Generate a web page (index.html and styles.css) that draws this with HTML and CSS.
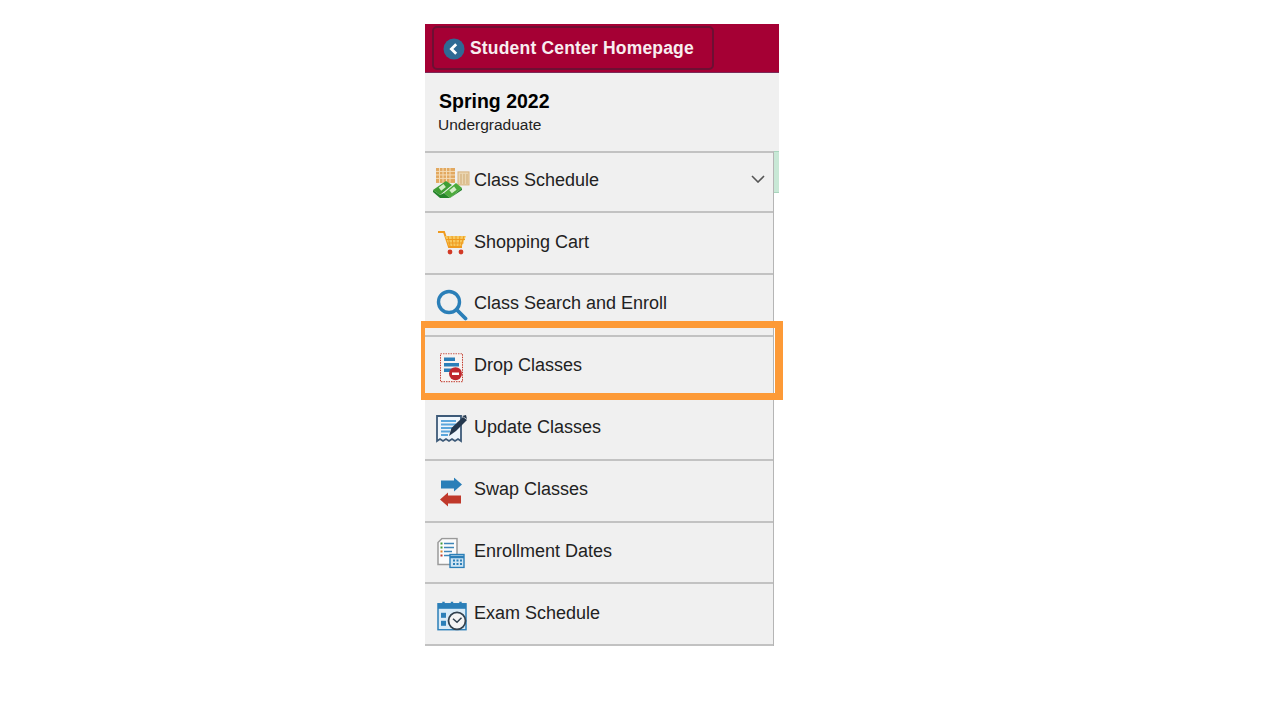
FILE: index.html
```html
<!DOCTYPE html>
<html>
<head>
	<meta charset="utf-8">
	<title>Student Center Homepage</title>
	<link rel="stylesheet" href="styles.css">
</head>
<body>

<div class='panel'>
	<header class='topbar'>
		<a class='back' href='#'>
			<svg class='back-icon' width='22' height='22' viewBox='0 0 22 22'>
				<circle cx='11' cy='11' r='10.5' fill='#2f6a94'/>
				<path d='M13.2 6.2 8.4 11l4.8 4.8' fill='none' stroke='#fff' stroke-width='2.8'/>
			</svg>
			<span>Student Center Homepage</span>
		</a>
	</header>

	<div class='term'>
		<h1>Spring 2022</h1>
		<p>Undergraduate</p>
	</div>

	<div class='list-wrap'>
		<ul class='menu'>
			<li class='row-schedule'>
				<svg class='icon' width='38' height='32' viewBox='0 0 38 32'>
					<rect x='3' y='0' width='19' height='15' fill='#e2a85f'/>
					<path d='M3 3.500h19M3 7h19M3 10.500h19M6.500 0v15M10 0v15M13.500 0v15M17 0v15' stroke='#f5dcb6' stroke-width='1'/>
					<rect x='25' y='4' width='11' height='13' fill='#ead6b2' stroke='#d8b27c'/>
					<path d='M28 6v10M31 6v10M34 6v10' stroke='#cfa870'/>
					<path d='M0 22 13 13 19 17 7 27Z' fill='#3f9e34'/>
					<path d='M11 25 23 15 29 20 17 30Z' fill='#4cab3c'/>
					<path d='M0 22v2l7 6h10l12-8v-2L17 30 11 25 7 27Z' fill='#24832a'/>
					<rect x='6' y='17.500' width='6' height='4' transform='rotate(-38 9 19)' fill='#d5edc8'/>
					<rect x='17' y='20' width='6' height='4' transform='rotate(-38 20 22)' fill='#d5edc8'/>
				</svg>
				<span class='label'>Class Schedule</span>
				<svg class='chevron' width='14' height='8' viewBox='0 0 14 8'>
					<path d='M1 1l6 6 6-6' fill='none' stroke='#555' stroke-width='1.600'/>
				</svg>
			</li>
			<li class='row-cart'>
				<svg class='icon' width='32' height='26' viewBox='0 0 32 26'>
					<path d='M1 2h6l5 15h13' fill='none' stroke='#ef9a1e' stroke-width='2'/>
					<path d='M8 6h21l-4 10H12Z' fill='#f7c95e'/>
					<path d='M11 6l2 10M15 6l1 10M19 6v10M23 6l-1 10M27 6l-3 10M9 9.500h19M10.500 13h16' stroke='#ef9a1e' stroke-width='1' fill='none'/>
					<circle cx='13' cy='22' r='2.400' fill='#d23a26'/>
					<circle cx='24' cy='22' r='2.400' fill='#d23a26'/>
				</svg>
				<span class='label'>Shopping Cart</span>
			</li>
			<li class='row-search'>
				<svg class='icon' width='32' height='32' viewBox='0 0 32 32'>
					<circle cx='13' cy='13' r='10.500' fill='none' stroke='#2b7fb8' stroke-width='3.400'/>
					<path d='M20.500 20.500 29.500 29.500' stroke='#2b7fb8' stroke-width='3.800' stroke-linecap='round'/>
				</svg>
				<span class='label'>Class Search and Enroll</span>
			</li>
			<li class='row-drop'>
				<svg class='icon' width='24' height='30' viewBox='0 0 24 30'>
					<rect x='.5' y='.5' width='22' height='28' fill='#f7f3f1' stroke='#c0392b' stroke-dasharray='1.500 1'/>
					<path d='M4 6h11M4 11.500h15M4 17h11' stroke='#2b7fb8' stroke-width='3.400'/>
					<circle cx='15.500' cy='20.500' r='6.500' fill='#c0272d'/>
					<path d='M12 20.500h7' stroke='#fff' stroke-width='2.400'/>
				</svg>
				<span class='label'>Drop Classes</span>
			</li>
			<li class='row-update'>
				<svg class='icon' width='32' height='30' viewBox='0 0 32 30'>
					<path d='M1 2h24v25l-3-2-3 2-3-2-3 2-3-2-3 2-3-2-3 2Z' fill='#eef5fb' stroke='#3d5a78' stroke-width='1.800'/>
					<path d='M5 7h15M5 10.500h15M5 14h12M5 17.500h9M5 21h7' stroke='#5aa6dc' stroke-width='2.200'/>
					<path d='M13 22 15.500 14 27 3l4 3-11 11Z' fill='#24384e'/>
					<path d='M26 2l4-1 1 4Z' fill='#24384e'/>
				</svg>
				<span class='label'>Update Classes</span>
			</li>
			<li class='row-swap'>
				<svg class='icon' width='24' height='30' viewBox='0 0 24 30'>
					<path d='M2 3h13V0l8 7-8 7v-3H2Z' fill='#2b7fb8'/>
					<path d='M22 18H9v-3l-8 7 8 7v-3h13Z' fill='#c0392b'/>
				</svg>
				<span class='label'>Swap Classes</span>
			</li>
			<li class='row-dates'>
				<svg class='icon' width='28' height='31' viewBox='0 0 28 31'>
					<path d='M5 1h15v26H1V5Z' fill='#fbfbfb' stroke='#9a9a9a' stroke-width='1.500'/>
					<path d='M7 6h10M7 10h10M7 14h8M7 18h6' stroke='#3f86b8' stroke-width='1.400'/>
					<path d='M3.500 6h2M3.500 10h2' stroke='#3f9a3a' stroke-width='1.800'/>
					<path d='M3.500 14h2' stroke='#d9822b' stroke-width='1.800'/>
					<path d='M3.500 18h2' stroke='#c0392b' stroke-width='1.800'/>
					<rect x='13' y='17' width='14' height='13' fill='#cfe4f3' stroke='#2b7fb8' stroke-width='1.400'/>
					<path d='M13 19.500h14' stroke='#2b7fb8' stroke-width='2.600'/>
					<path d='M16 23h2M19.500 23h2M23 23h2M16 26.500h2M19.500 26.500h2M23 26.500h2' stroke='#2b7fb8' stroke-width='1.800'/>
				</svg>
				<span class='label'>Enrollment Dates</span>
			</li>
			<li class='row-exam'>
				<svg class='icon' width='30' height='30' viewBox='0 0 30 30'>
					<rect x='1' y='3' width='28' height='26' fill='#d9ebf7' stroke='#2b7fb8' stroke-width='1.500'/>
					<rect x='1' y='3' width='28' height='5' fill='#2b7fb8'/>
					<path d='M6.500 1v5M23.500 1v5M15 1v5' stroke='#2b7fb8' stroke-width='2.400'/>
					<rect x='4' y='12' width='5' height='5' fill='#2b7fb8'/>
					<rect x='4' y='20' width='5' height='5' fill='#2b7fb8'/>
					<circle cx='20' cy='20' r='8.500' fill='#f4f4f4' stroke='#33424f' stroke-width='1.800'/>
					<path d='M16 18 20 21.500 24.500 17' fill='none' stroke='#33424f' stroke-width='1.500'/>
				</svg>
				<span class='label'>Exam Schedule</span>
			</li>
		</ul>
		<div class='tab'></div>
	</div>
</div>

<div class='callout'></div>

</body>
</html>
```

FILE: styles.css
```css
* {
	box-sizing: border-box;
}

body {
	margin: 0;
	padding: 24px 0 0 425px;
	background: #fff;
	font-family: 'Liberation Sans', Arial, sans-serif;
	color: #222;
}

.panel {
	width: 354px;
}

.topbar {
	height: 49px;
	padding: 2px 0 0 7px;
	background: #a50034;
	border-bottom: 1px solid #7b2a58;
}

.back {
	display: flex;
	align-items: center;
	gap: 5px;
	width: 282px;
	height: 44px;
	padding: 1px 0 0 9px;
	border: 2px solid #6d0f33;
	border-radius: 5px;
	color: #f8eef0;
	font-size: 17.500px;
	font-weight: bold;
	letter-spacing: 0.18px;
	text-decoration: none;
}

.term {
	height: 78px;
	padding: 17px 0 0 13px;
	background: #f0f0f0;
}

.term h1 {
	margin: 0 0 0 1px;
	font-size: 19.500px;
	line-height: 23px;
	color: #000;
}

.term p {
	margin: 3px 0 0;
	font-size: 15.500px;
	line-height: 18px;
}

.list-wrap {
	display: flex;
	align-items: flex-start;
}

.menu {
	width: 349px;
	margin: 0;
	padding: 0;
	list-style: none;
	background: #f0f0f0;
	border-top: 2px solid #c2c2c2;
	border-right: 1px solid #b5b5b5;
}

.menu li {
	position: relative;
	display: flex;
	align-items: center;
	height: 62px;
	padding: 0 8px 4px 49px;
	border-bottom: 2px solid #c2c2c2;
}

.menu li.row-schedule {
	height: 60px;
	padding-bottom: 4px;
}

.menu li.row-cart {
	padding-bottom: 2px;
}

.menu li.row-dates {
	height: 61px;
	padding-bottom: 3px;
}

.menu li.row-exam {
	padding-bottom: 2px;
}

.label {
	font-size: 18px;
}

.icon {
	position: absolute;
	top: 50%;
	left: 12px;
	transform: translateY(-50%);
}

.row-schedule .icon {
	left: 8px;
	transform: translateY(-44%);
}

.row-search .icon {
	left: 11px;
	transform: translateY(-50%);
}

.row-drop .icon {
	left: 15px;
	transform: translateY(-46%);
}

.row-update .icon {
	left: 11px;
}

.row-swap .icon {
	left: 14px;
	transform: translateY(-45%);
}

.row-exam .icon {
	left: 12px;
	transform: translateY(-44%);
}

.chevron {
	margin: 0 0 2px auto;
}

.tab {
	width: 5px;
	height: 42px;
	background: #c8e8d6;
	border-top: 1px solid #a9d5bd;
	border-bottom: 1px solid #a9d5bd;
}

.callout {
	position: absolute;
	top: 321px;
	left: 421px;
	width: 362px;
	height: 79px;
	border: 7px solid #fd9a37;
	border-width: 7px 8px 7px 4px;
}
```
